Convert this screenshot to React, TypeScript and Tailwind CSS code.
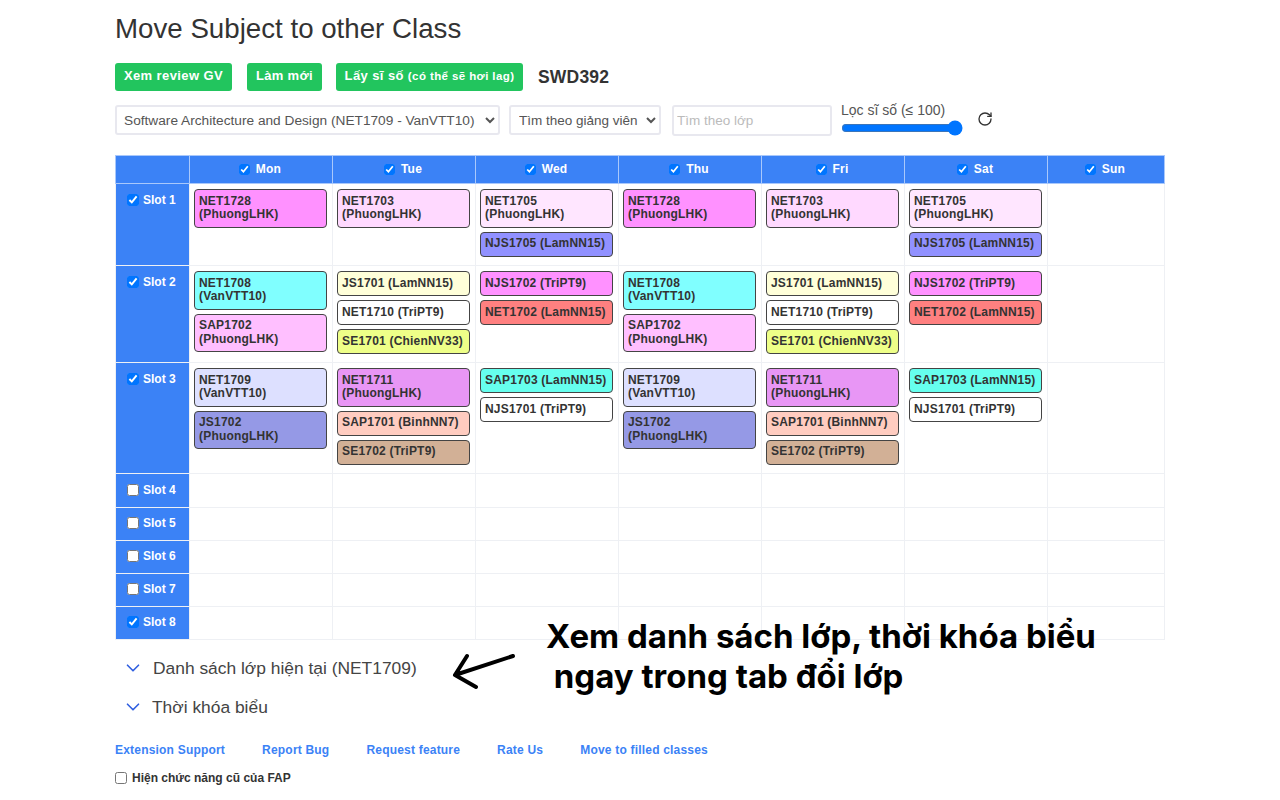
import { ChevronDown, RotateCw } from 'lucide-react';

type Card = { code: string; teacher: string; color: string; wrap?: boolean };

const net1728 = { code: 'NET1728', teacher: 'PhuongLHK', color: 'bg-[#ff91ff]', wrap: true };
const net1703 = { code: 'NET1703', teacher: 'PhuongLHK', color: 'bg-[#ffd9ff]', wrap: true };
const net1705 = { code: 'NET1705', teacher: 'PhuongLHK', color: 'bg-[#ffe6ff]', wrap: true };
const njs1705 = { code: 'NJS1705', teacher: 'LamNN15', color: 'bg-[#9191ff]' };
const net1708 = { code: 'NET1708', teacher: 'VanVTT10', color: 'bg-[#80ffff]', wrap: true };
const sap1702 = { code: 'SAP1702', teacher: 'PhuongLHK', color: 'bg-[#ffbfff]', wrap: true };
const js1701 = { code: 'JS1701', teacher: 'LamNN15', color: 'bg-[#ffffd9]' };
const net1710 = { code: 'NET1710', teacher: 'TriPT9', color: 'bg-white' };
const se1701 = { code: 'SE1701', teacher: 'ChienNV33', color: 'bg-[#eeff88]' };
const njs1702 = { code: 'NJS1702', teacher: 'TriPT9', color: 'bg-[#ff91ff]' };
const net1702 = { code: 'NET1702', teacher: 'LamNN15', color: 'bg-[#ff8080]' };
const net1709 = { code: 'NET1709', teacher: 'VanVTT10', color: 'bg-[#dde0ff]', wrap: true };
const js1702 = { code: 'JS1702', teacher: 'PhuongLHK', color: 'bg-[#9599e6]', wrap: true };
const net1711 = { code: 'NET1711', teacher: 'PhuongLHK', color: 'bg-[#e896f5]', wrap: true };
const sap1701 = { code: 'SAP1701', teacher: 'BinhNN7', color: 'bg-[#ffccc0]' };
const se1702 = { code: 'SE1702', teacher: 'TriPT9', color: 'bg-[#d2b096]' };
const sap1703 = { code: 'SAP1703', teacher: 'LamNN15', color: 'bg-[#66ffee]' };
const njs1701 = { code: 'NJS1701', teacher: 'TriPT9', color: 'bg-white' };

const days = ['Mon', 'Tue', 'Wed', 'Thu', 'Fri', 'Sat', 'Sun'];

const slots: { name: string; checked: boolean; height: string; pad: string; cells: Card[][] }[] = [
  {
    name: 'Slot 1',
    checked: true,
    height: 'h-[82px]',
    pad: 'pt-[7px]',
    cells: [[net1728], [net1703], [net1705, njs1705], [net1728], [net1703], [net1705, njs1705], []],
  },
  {
    name: 'Slot 2',
    checked: true,
    height: 'h-[97px]',
    pad: 'pt-[7px]',
    cells: [
      [net1708, sap1702],
      [js1701, net1710, se1701],
      [njs1702, net1702],
      [net1708, sap1702],
      [js1701, net1710, se1701],
      [njs1702, net1702],
      [],
    ],
  },
  {
    name: 'Slot 3',
    checked: true,
    height: 'h-[111px]',
    pad: 'pt-[7px]',
    cells: [
      [net1709, js1702],
      [net1711, sap1701, se1702],
      [sap1703, njs1701],
      [net1709, js1702],
      [net1711, sap1701, se1702],
      [sap1703, njs1701],
      [],
    ],
  },
  { name: 'Slot 4', checked: false, height: 'h-[34px]', pad: 'pt-[7px]', cells: [[], [], [], [], [], [], []] },
  { name: 'Slot 5', checked: false, height: 'h-[33px]', pad: 'pt-[6px]', cells: [[], [], [], [], [], [], []] },
  { name: 'Slot 6', checked: false, height: 'h-[33px]', pad: 'pt-[6px]', cells: [[], [], [], [], [], [], []] },
  { name: 'Slot 7', checked: false, height: 'h-[33px]', pad: 'pt-[6px]', cells: [[], [], [], [], [], [], []] },
  { name: 'Slot 8', checked: true, height: 'h-[33px]', pad: 'pt-[6px]', cells: [[], [], [], [], [], [], []] },
];

const links = ['Extension Support', 'Report Bug', 'Request feature', 'Rate Us', 'Move to filled classes'];

function ClassCard({ card }: { card: Card }) {
  return (
    <div className={`rounded-[4px] border border-[#444] px-1 py-[4.75px] text-[12px] leading-[13.5px] font-bold tracking-[0.2px] text-[#333] ${card.color}`}>
      {card.wrap ? (
        <>
          {card.code}
          <br />({card.teacher})
        </>
      ) : (
        `${card.code} (${card.teacher})`
      )}
    </div>
  );
}

export default function App() {
  return (
    <div className="relative h-[800px] w-[1280px] overflow-hidden bg-white px-[115px] font-['Liberation_Sans',Arial,sans-serif] text-[#333]">
      <h1 className="pt-[12px] text-[27.7px] leading-[34px] font-normal">Move Subject to other Class</h1>

      {/* Nút chức năng */}
      <div className="mt-[17px] flex h-[28px] items-center">
        <button className="h-[28px] w-[117px] rounded-[3px] bg-[#22c55e] pb-[2px] text-[13px] font-bold tracking-[0.4px] text-white">Xem review GV</button>
        <button className="ml-[15px] h-[28px] w-[75px] rounded-[3px] bg-[#22c55e] pb-[2px] text-[13px] font-bold tracking-[0.3px] text-white">Làm mới</button>
        <button className="ml-[14px] h-[28px] w-[187px] rounded-[3px] bg-[#22c55e] pb-[2px] text-[13px] font-bold tracking-[0.4px] text-white">
          Lấy sĩ số <span className="text-[11.5px]">(có thể sẽ hơi lag)</span>
        </button>
        <span className="ml-[15px] text-[17.5px] font-bold tracking-[0.2px]">SWD392</span>
      </div>

      {/* Bộ lọc */}
      <div className="mt-[10px] flex h-[36px] items-center">
        <select className="mt-[2px] h-[30px] w-[385px] rounded-[3px] border-2 border-[#e8e8ef] bg-white pl-[3px] text-[13.7px] text-[#555]">
          <option>Software Architecture and Design (NET1709 - VanVTT10)</option>
        </select>
        <select className="mt-[2px] ml-[9px] h-[30px] w-[152px] rounded-[3px] border-2 border-[#e8e8ef] bg-white pl-[4px] text-[13.5px] text-[#555]">
          <option>Tìm theo giảng viên</option>
        </select>
        <input
          className="mt-[2px] ml-[11px] h-[31px] w-[160px] rounded-[3px] border-2 border-[#e8e8ef] px-[3px] text-[13.5px] placeholder:text-[#bbb]"
          placeholder="Tìm theo lớp"
        />
        <div className="ml-[9px] flex w-[122px] flex-col">
          <label className="-mt-[1px] text-[14px] leading-[16px] whitespace-nowrap text-[#555]">Lọc sĩ số (≤ 100)</label>
          <input type="range" min={0} max={100} defaultValue={100} className="mt-[2px] h-[16px] w-[122px]" />
        </div>
        <RotateCw className="ml-[14px] text-[#333]" size={16} strokeWidth={2} />
      </div>

      {/* Thời khóa biểu */}
      <table className="mt-[18px] w-[1050px] table-fixed border-collapse">
        <thead>
          <tr className="h-[28px] bg-[#3b82f6]">
            <th className="w-[74px] border border-[#a9c8fb]"></th>
            {days.map((d, i) => (
              <th key={d} className={`border border-[#a9c8fb] pr-[2px] pb-[1px] text-[12px] font-bold tracking-[0.2px] text-white ${i === 6 ? 'w-[117px]' : 'w-[143px]'}`}>
                <label className="flex items-center justify-center gap-[6px]">
                  <input type="checkbox" defaultChecked className="h-[11px] w-[11px]" />
                  {d}
                </label>
              </th>
            ))}
          </tr>
        </thead>
        <tbody>
          {slots.map((s) => (
            <tr key={s.name} className={s.height}>
              <td className={`border border-[#eef0f4] bg-[#3b82f6] pl-[11px] align-top text-[12px] font-bold text-white ${s.pad}`}>
                <label className="flex items-center gap-[4px]">
                  <input type="checkbox" defaultChecked={s.checked} className="h-[12px] w-[12px]" />
                  {s.name}
                </label>
              </td>
              {s.cells.map((cards, i) => (
                <td key={i} className="border border-[#eef0f4] pt-[5px] pr-[5px] pl-[4px] align-top">
                  <div className="flex flex-col gap-[4px]">
                    {cards.map((c) => (
                      <ClassCard key={c.code} card={c} />
                    ))}
                  </div>
                </td>
              ))}
            </tr>
          ))}
        </tbody>
      </table>

      {/* Danh sách mở rộng */}
      <div className="mt-[18px] flex h-[20px] items-center text-[#444]">
        <ChevronDown className="ml-[7px] shrink-0 text-[#2f5fe0]" size={22} strokeWidth={1.8} />
        <span className="ml-[9px] text-[17.4px]">Danh sách lớp hiện tại (NET1709)</span>
      </div>
      <div className="mt-[19px] flex h-[20px] items-center text-[#444]">
        <ChevronDown className="ml-[7px] shrink-0 text-[#2f5fe0]" size={22} strokeWidth={1.8} />
        <span className="ml-[8px] text-[17.4px]">Thời khóa biểu</span>
      </div>

      <div className="mt-[24px] flex gap-[37px] text-[12px] font-bold tracking-[0.2px] text-[#3b82f6]">
        {links.map((l) => (
          <a key={l}>{l}</a>
        ))}
      </div>

      <label className="mt-[10px] flex items-center gap-[5px] text-[12px] font-bold text-[#333]">
        <input type="checkbox" className="m-0 h-[12px] w-[12px]" />
        Hiện chức năng cũ của FAP
      </label>

      {/* Chú thích đè lên ảnh */}
      <div className="absolute top-[616px] left-[546px] font-['Inter',sans-serif] text-[33px] leading-[40px] font-bold whitespace-pre text-black">
        {'Xem danh sách lớp, thời khóa biểu\n ngay trong tab đổi lớp'}
      </div>
      <svg className="absolute top-[650px] left-[448px]" width="72" height="42" viewBox="448 650 72 42" fill="none">
        <path d="M513 656 L455 675 M467 656 L455 675 L476 687" stroke="#000" strokeWidth="4" strokeLinecap="round" strokeLinejoin="round" />
      </svg>
    </div>
  );
}
